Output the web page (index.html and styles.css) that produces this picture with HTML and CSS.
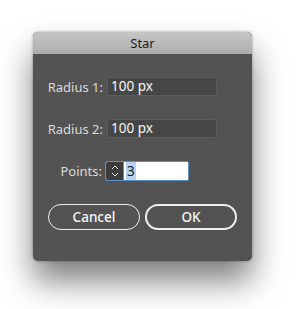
FILE: index.html
```html
<!DOCTYPE html>
<html lang="en">
<head>
    <meta charset="UTF-8">
    <title>Star</title>
    <link rel="stylesheet" href="styles.css">
</head>
<body>
    <div class="dialog">
        <div class="titlebar">Star</div>
        <div class="content">
            <div class="row">
                <label class="label">Radius 1:</label>
                <div class="field">100 px</div>
            </div>
            <div class="row">
                <label class="label">Radius 2:</label>
                <div class="field">100 px</div>
            </div>
            <div class="row points">
                <label class="label">Points:</label>
                <div class="spinner">
                    <svg width="10" height="16" viewBox="0 0 10 16">
                        <path d="M2 6 L5 3 L8 6" fill="none" stroke="#e8e8e8" stroke-width="1"/>
                        <path d="M2 10 L5 13 L8 10" fill="none" stroke="#e8e8e8" stroke-width="1"/>
                    </svg>
                </div>
                <div class="numfield"><span class="sel">3</span></div>
            </div>
            <div class="buttons">
                <button class="btn">Cancel</button>
                <button class="btn ok">OK</button>
            </div>
        </div>
    </div>
</body>
</html>
```

FILE: styles.css
```css
html, body {
    height: 100%;
}
body {
    margin: 0;
    min-height: 309px;
    padding-top: 32px;
    box-sizing: border-box;
    background: #ffffff;
    font-family: "Noto Sans", "DejaVu Sans", sans-serif;
}
.dialog {
    margin-left: 33px;
    width: 219px;
    height: 229px;
    background: #535353;
    border-radius: 5px;
    box-shadow: 0 20px 32px rgba(0, 0, 0, 0.5), 0 0 3px rgba(0, 0, 0, 0.35);
    overflow: hidden;
}
.titlebar {
    height: 22px;
    line-height: 22px;
    text-align: center;
    font-size: 13px;
    color: #1e1e1e;
    background: linear-gradient(#c6c6c6, #acacac);
}
.content {
    padding-top: 23px;
}
.row {
    display: flex;
    align-items: center;
    height: 19px;
    margin-bottom: 23px;
}
.label {
    width: 70px;
    text-align: right;
    font-size: 13px;
    color: #dadada;
}
.field {
    margin-left: 4px;
    width: 110px;
    height: 19px;
    box-sizing: border-box;
    background: #464646;
    border: 1px solid #5c5c5c;
    border-radius: 2px;
    color: #f6f6f6;
    font-size: 13.5px;
    line-height: 17px;
    padding-left: 3px;
}
.points {
    height: 20px;
}
.points .label {
    width: 69px;
}
.spinner {
    margin-left: 3px;
    width: 18px;
    height: 20px;
    box-sizing: border-box;
    background: #3c3c3c;
    border: 1px solid #5d8fc4;
    border-right: none;
    border-radius: 3px 0 0 3px;
    display: flex;
    align-items: center;
    justify-content: center;
}
.numfield {
    width: 66px;
    height: 20px;
    box-sizing: border-box;
    background: #ffffff;
    border: 1px solid #5d8fc4;
    border-radius: 0 2px 2px 0;
    font-size: 13.5px;
    line-height: 18px;
    padding-left: 2px;
    color: #1a1a1a;
}
.sel {
    background: #b4d3f5;
    padding: 0 1px;
}
.buttons {
    display: flex;
    gap: 5px;
    padding-left: 15px;
}
.btn {
    width: 92px;
    height: 26px;
    background: transparent;
    border: 1.5px solid #efefef;
    border-radius: 13px;
    color: #f8f8f8;
    font-family: "Noto Sans", "DejaVu Sans", sans-serif;
    font-size: 13.5px;
    font-weight: 500;
    padding: 0;
}
.ok {
    border-width: 2px;
}
```
